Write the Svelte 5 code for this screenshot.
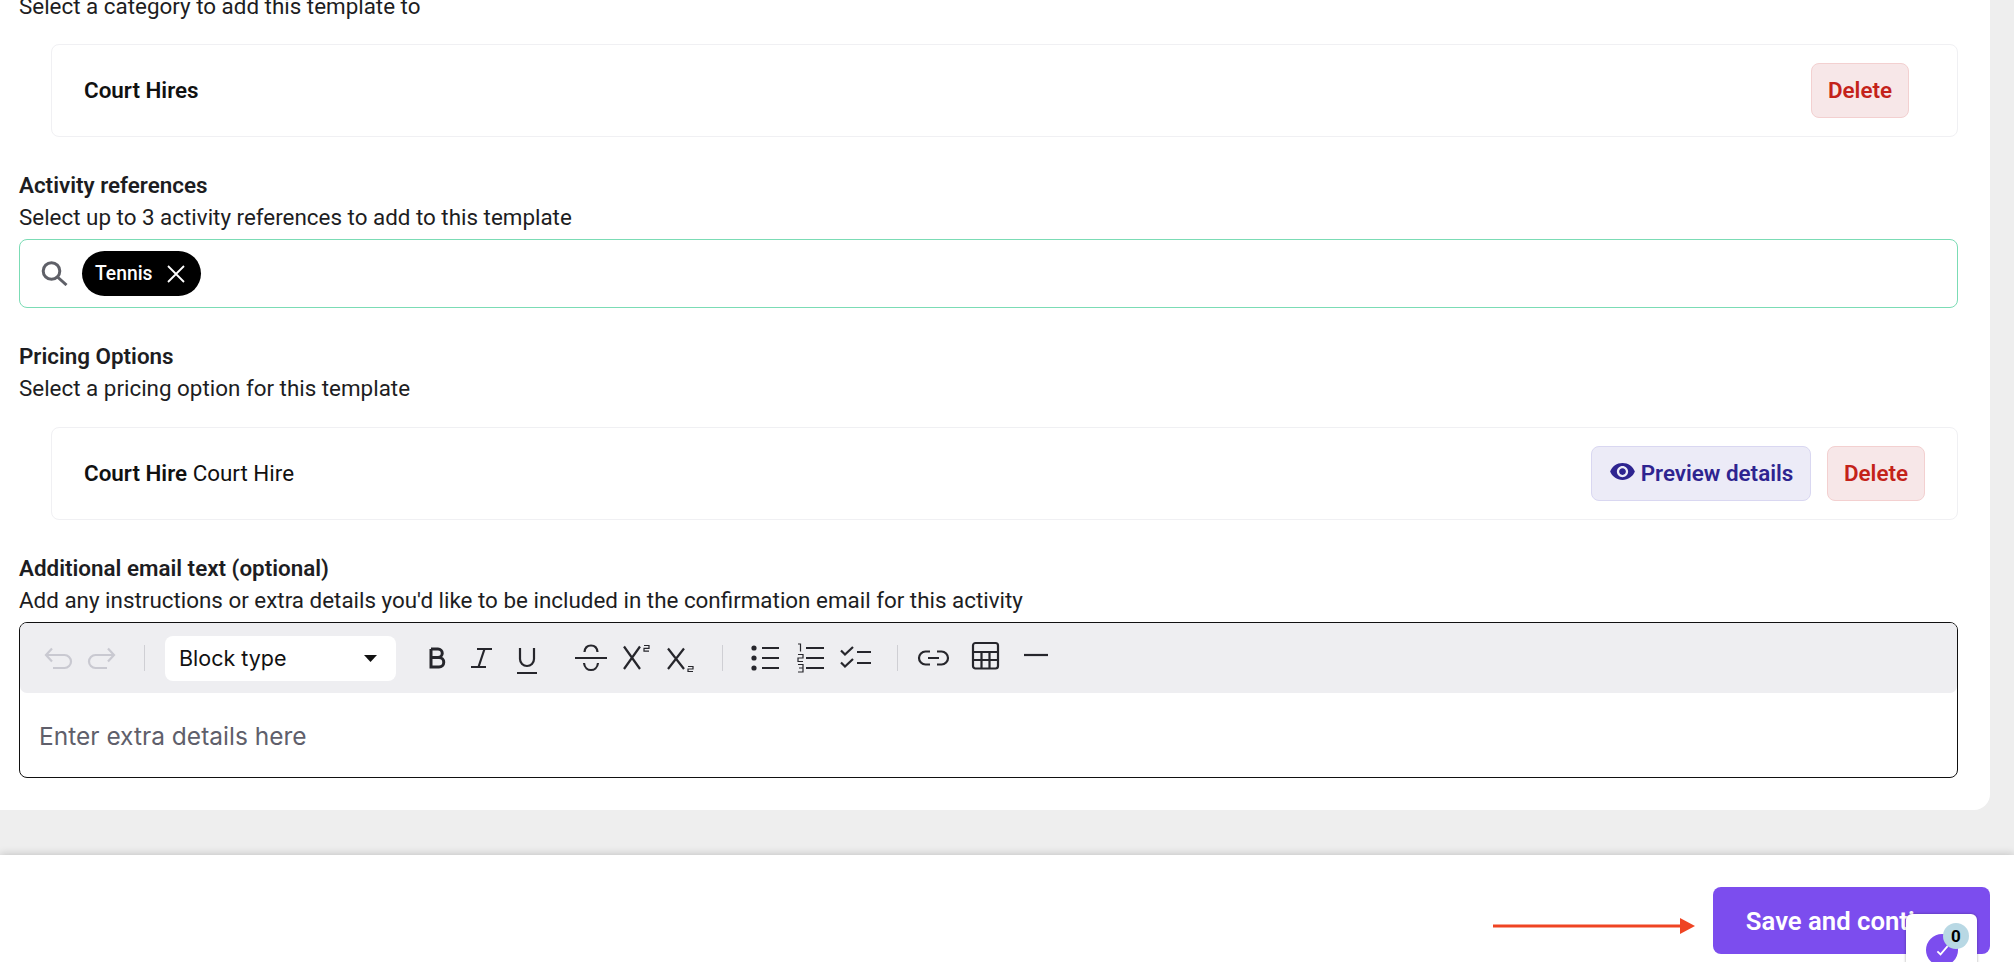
<script>
    // toolbar icon stroke colours
    const disabled = "#c9c9d1";
    const ink = "#26262c";
</script>

<div class="page">
    <main class="panel">
        <p class="sub">Select a category to add this template to</p>
        <div class="card card-wide">
            <span class="name"><b>Court Hires</b></span>
            <button class="btn danger">Delete</button>
        </div>

        <h3>Activity references</h3>
        <p class="sub">Select up to 3 activity references to add to this template</p>
        <div class="search">
            <svg class="search-icon" width="27" height="25" viewBox="0 0 27 25" fill="none" stroke="#5f6068" stroke-width="3">
                <circle cx="10.5" cy="10" r="8.3" />
                <path d="M16.5 16 25.5 24" />
            </svg>
            <span class="chip">
                Tennis
                <svg width="18" height="18" viewBox="0 0 18 18" fill="none" stroke="#fff" stroke-width="1.8">
                    <path d="M1 1 17 17M17 1 1 17" />
                </svg>
            </span>
        </div>

        <h3>Pricing Options</h3>
        <p class="sub">Select a pricing option for this template</p>
        <div class="card">
            <span class="name"><b>Court Hire</b> Court Hire</span>
            <div class="actions">
                <button class="btn preview">
                    <svg class="eye" width="27" height="27" viewBox="0 0 24 24" fill="#2e2490">
                        <path d="M12 4.500C7 4.500 2.730 7.610 1 12c1.730 4.390 6 7.500 11 7.500s9.270-3.110 11-7.500c-1.730-4.390-6-7.500-11-7.500zM12 17c-2.760 0-5-2.240-5-5s2.240-5 5-5 5 2.240 5 5-2.240 5-5 5zm0-8c-1.660 0-3 1.340-3 3s1.340 3 3 3 3-1.340 3-3-1.340-3-3-3z" />
                    </svg>
                    Preview details
                </button>
                <button class="btn danger">Delete</button>
            </div>
        </div>

        <h3>Additional email text (optional)</h3>
        <p class="sub">Add any instructions or extra details you'd like to be included in the confirmation email for this activity</p>
        <div class="editor">
            <div class="toolbar">
                <div class="group">
                    <svg class="tool" viewBox="0 0 44 32" stroke={disabled}>
                        <path d="M16 6.500 10 13l6 6.500M10 13H28.500a6.500 6.500 0 0 1 0 13H17" />
                    </svg>
                    <svg class="tool" viewBox="0 0 44 32" stroke={disabled}>
                        <path d="M28 6.500 34 13l-6 6.500M34 13H15.500a6.500 6.500 0 0 0 0 13H27" />
                    </svg>
                </div>
                <span class="sep"></span>
                <div class="select">
                    Block type
                    <svg width="13" height="7" viewBox="0 0 13 7" fill="#111"><path d="M0 0H13L6.500 7Z" /></svg>
                </div>
                <div class="group marks">
                    <svg class="tool bold" viewBox="0 0 44 32" stroke={ink}>
                        <path d="M16 7V25H24a4.700 4.700 0 0 0 0-9.500H16M16 15.500H23a4.200 4.200 0 0 0 0-8.500H16" />
                    </svg>
                    <svg class="tool" viewBox="0 0 44 32" stroke={ink}>
                        <path d="M18 7H33M12 25H27M25.500 7 19.500 25" />
                    </svg>
                    <svg class="tool under" viewBox="0 0 44 32" stroke={ink}>
                        <path d="M15 6V17a7 7 0 0 0 14 0V6M12 31H32" />
                    </svg>
                </div>
                <div class="group scripts">
                    <svg class="tool" viewBox="0 0 44 32" stroke={ink}>
                        <path d="M6 16H38M15.500 10C16 5 19 3.500 22 3.500S28 5 28.500 10M15 21C15.500 26 19 28 22 28S28.500 26 29 21" />
                    </svg>
                    <svg class="tool" viewBox="0 0 44 32" stroke={ink}>
                        <path d="M10 4.500 26 27M26 4.500 10 27" />
                        <path class="small" d="M30 3.500H35V6.300H30V9.200H35" />
                    </svg>
                    <svg class="tool" viewBox="0 0 44 32" stroke={ink}>
                        <path d="M10 6.500 26 27M26 6.500 10 27" />
                        <path class="small" d="M30 24.500H35V27H30V29.500H35" />
                    </svg>
                </div>
                <span class="sep"></span>
                <div class="group lists">
                    <svg class="tool" viewBox="0 0 44 32" stroke={ink}>
                        <circle cx="11" cy="6" r="1.500" fill={ink} />
                        <circle cx="11" cy="16" r="1.500" fill={ink} />
                        <circle cx="11" cy="26" r="1.500" fill={ink} />
                        <path d="M19 6H36M19 16H36M19 26H36" />
                    </svg>
                    <svg class="tool" viewBox="0 0 44 32" stroke={ink}>
                        <path class="small" d="M10 2H12.500V9.500M10 12.500H15V16H10V19.500H15M10 22.500H15V30H10M11 26H15" />
                        <path d="M18 6H36M18 16H36M18 26H36" />
                    </svg>
                    <svg class="tool" viewBox="0 0 44 32" stroke={ink}>
                        <path d="M8 8.500 12 12.500 20 5M8 20.500 12 24.500 20 17M24 10H38M24 21H38" />
                    </svg>
                </div>
                <span class="sep"></span>
                <div class="group inserts">
                    <svg class="tool link" viewBox="0 0 31 32" stroke={ink}>
                        <path d="M12 9.500H7.500a6.500 6.500 0 0 0 0 13H12M19 9.500H23.500a6.500 6.500 0 0 1 0 13H19M10 16H21" />
                    </svg>
                    <svg class="tool table" viewBox="0 0 27 32" stroke={ink}>
                        <rect x="1" y="1" width="25" height="25.500" rx="2.500" />
                        <path d="M1 10H26M1 18H26M9.500 10V26M17.500 10V26" />
                    </svg>
                    <svg class="tool rule" viewBox="0 0 26 32" stroke={ink}>
                        <path d="M2 13H26" />
                    </svg>
                </div>
            </div>
            <div class="editor-body">Enter extra details here</div>
        </div>
    </main>

    <footer class="footer">
        <svg class="arrow" width="202" height="16" viewBox="0 0 202 16" fill="#ef4423">
            <path d="M0 6.500H187V0L202 8 187 16V9.500H0Z" />
        </svg>
        <button class="save">Save and continue</button>
    </footer>

    <!-- checklist launcher, sits on top of the footer -->
    <div class="launcher">
        <span class="launcher-dot">
            <svg width="13" height="11" viewBox="0 0 16 14" fill="none" stroke="#fff" stroke-width="2.200">
                <path d="M1.500 8 5.500 12 14.500 1.500" />
            </svg>
        </span>
        <span class="launcher-count">0</span>
    </div>
</div>

<style>
    :global(body) {
        background: #eeeeee;
    }

    .page {
        position: relative;
        display: flex;
        flex-direction: column;
        height: 962px;
        overflow: hidden;
        font-family: Roboto, "Liberation Sans", sans-serif;
        font-size: 22.4px;
        line-height: 32px;
        color: #1d1d22;
    }

    .panel {
        flex: none;
        height: 820px;
        margin-top: -10px;
        margin-right: 24px;
        padding: 0 32px 0 19px;
        box-sizing: border-box;
        background: #fff;
        border-radius: 0 0 16px 0;
    }

    h3 {
        margin: 32px 0 0;
        font-size: inherit;
        font-weight: 600;
    }

    .sub {
        margin: 0;
    }

    .card {
        display: flex;
        align-items: center;
        justify-content: space-between;
        height: 93px;
        margin: 23px 0 0 32px;
        padding: 0 32px;
        box-sizing: border-box;
        border: 1px solid #f0f0f3;
        border-radius: 8px;
    }

    .card-wide {
        margin-top: 22px;
        padding-right: 48px;
    }

    .name {
        padding-bottom: 2px;
        color: #111;
    }

    .name b {
        font-weight: 600;
    }

    .actions {
        display: flex;
        gap: 16px;
    }

    .btn {
        display: flex;
        align-items: center;
        justify-content: center;
        gap: 5px;
        height: 55px;
        padding: 0 0 2px;
        box-sizing: border-box;
        border: 1px solid;
        border-radius: 8px;
        font: inherit;
        font-weight: 600;
    }

    .danger {
        width: 98px;
        background: #f7e7e8;
        border-color: #f3d0d0;
        color: #c4221a;
    }

    .preview {
        width: 220px;
        background: #ecebf7;
        border-color: #d9d7f1;
        color: #2e2490;
    }

    .eye {
        margin-bottom: 3px;
    }

    .search {
        display: flex;
        align-items: center;
        gap: 14px;
        height: 69px;
        margin-top: 6px;
        padding-left: 21px;
        box-sizing: border-box;
        border: 1px solid #7bdcb5;
        border-radius: 8px;
    }

    .search-icon {
        flex: none;
    }

    .chip {
        display: flex;
        align-items: center;
        gap: 15px;
        height: 45px;
        padding: 0 16px 0 13px;
        background: #000;
        border-radius: 23px;
        color: #fff;
        font-size: 19.3px;
        font-weight: 500;
    }

    .editor {
        margin-top: 6px;
        height: 156px;
        box-sizing: border-box;
        border: 1px solid #111;
        border-radius: 8px;
        font-family: Inter, "Liberation Sans", sans-serif;
    }

    .toolbar {
        display: flex;
        align-items: center;
        gap: 20px;
        height: 70px;
        padding-left: 16px;
        box-sizing: border-box;
        background: #eeeef1;
        border-radius: 7px;
    }

    .group {
        display: flex;
        align-items: center;
    }

    .marks {
        margin-left: -1px;
    }

    .scripts {
        gap: 0.5px;
    }

    .lists {
        gap: 1px;
    }

    .inserts {
        gap: 23px;
    }

    .tool {
        display: block;
        width: 44px;
        height: 32px;
        fill: none;
        stroke-width: 2.2;
        overflow: visible;
    }

    .bold {
        stroke-width: 3;
    }

    .small {
        stroke-width: 1.2;
    }

    .under {
        margin-left: 2px;
    }

    .link {
        width: 31px;
    }

    .table {
        width: 27px;
    }

    .rule {
        width: 26px;
    }

    .sep {
        width: 1px;
        height: 26px;
        background: #cfcfd4;
    }

    .select {
        display: flex;
        align-items: center;
        justify-content: space-between;
        width: 231px;
        height: 45px;
        padding: 0 19px 0 14px;
        box-sizing: border-box;
        background: #fff;
        border-radius: 8px;
        color: #111;
        font-size: 21.5px;
    }

    .editor-body {
        padding: 27px 19px;
        color: #5f5f6b;
        font-size: 24.5px;
    }

    .footer {
        display: flex;
        align-items: flex-start;
        justify-content: flex-end;
        gap: 18px;
        height: 107px;
        margin-top: auto;
        padding: 32px 24px 0 0;
        box-sizing: border-box;
        background: #fff;
        box-shadow: 0 -1px 8px rgba(0, 0, 0, 0.18);
    }

    .arrow {
        margin-top: 31px;
    }

    .save {
        width: 277px;
        height: 67px;
        border: 0;
        border-radius: 8px;
        background: #7c4dee;
        color: #fff;
        font: inherit;
        font-size: 25.7px;
        font-weight: 600;
    }

    .launcher {
        position: absolute;
        left: 1906px;
        top: 914px;
        width: 71px;
        height: 60px;
        background: #fff;
        border-radius: 6px;
        box-shadow: 0 0 3px rgba(0, 0, 0, 0.35);
    }

    .launcher-dot {
        position: absolute;
        left: 20px;
        top: 20px;
        display: flex;
        align-items: center;
        justify-content: center;
        width: 32px;
        height: 32px;
        background: #7c4dee;
        border-radius: 50%;
    }

    .launcher-count {
        position: absolute;
        left: 37px;
        top: 9px;
        width: 26px;
        height: 26px;
        background: #b8d8e4;
        border-radius: 50%;
        color: #000;
        font-size: 17px;
        font-weight: 700;
        line-height: 26px;
        text-align: center;
    }
</style>
